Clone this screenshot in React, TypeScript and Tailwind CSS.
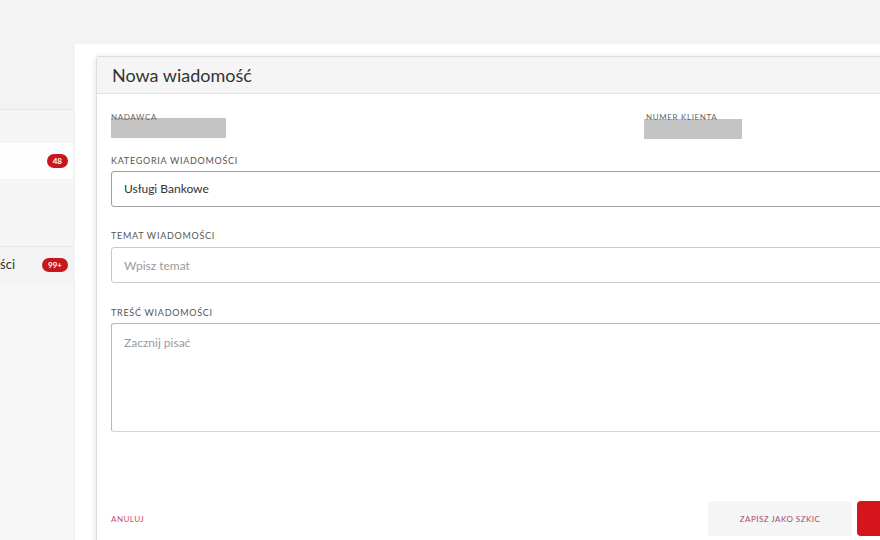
import { useState } from "react";

// Badge pill used in the folder list
function Badge({ count }: { count: string }) {
  return (
    <span className="h-[14px] px-[6px] rounded-full bg-[#c8161d] text-white text-[8px] font-bold leading-[14px] flex items-center justify-center shrink-0">
      {count}
    </span>
  );
}

function FieldLabel({ children }: { children: string }) {
  return (
    <div className="text-[9px] leading-[12px] tracking-[0.08em] text-[#555] uppercase">
      {children}
    </div>
  );
}

export default function App() {
  const [category] = useState("Usługi Bankowe");
  const [subject, setSubject] = useState("");
  const [body, setBody] = useState("");

  return (
    <div className="w-[880px] h-[540px] overflow-hidden bg-[#f3f3f3] font-['Lato','Open_Sans',sans-serif] flex flex-col">
      <div className="h-[44px] shrink-0" />

      <div className="flex flex-1 min-h-0 gap-[2px]">
        {/* folder list */}
        <aside className="w-[73px] shrink-0 flex flex-col overflow-hidden">
          <div className="h-[66px] shrink-0 border-b border-[#e6e6e6]" />
          <div className="h-[33px] shrink-0 bg-[#f5f5f5]" />
          <div className="h-[36px] shrink-0 bg-[#fdfdfd] flex items-center justify-end pr-[5px]">
            <Badge count="48" />
          </div>
          <div className="h-[68px] shrink-0 bg-[#f5f5f5] border-b border-[#e4e4e4]" />
          <div className="h-[36px] shrink-0 flex items-center justify-end pr-[5px] gap-[27px] overflow-hidden">
            <span className="text-[13px] text-[#333] whitespace-nowrap shrink-0">Wysłane wiadomości</span>
            <Badge count="99+" />
          </div>
          <div className="flex-1 bg-[#f7f7f7]" />
        </aside>

        <main className="flex-1 min-w-0 bg-white pl-[21px] pt-[12px] overflow-hidden">
          <section className="w-[920px] bg-white border border-[#dedede] rounded-t-[3px] shadow-[0_1px_6px_rgba(0,0,0,0.12)]">
            <header className="h-[37px] bg-[#f5f5f5] border-b border-[#e2e2e2] px-[15px] flex items-center">
              <h1 className="text-[18px] text-[#333]">Nowa wiadomość</h1>
            </header>

            <div className="px-[14px] pt-[18px] pb-[20px] flex flex-col">
              <div className="flex">
                <div className="w-[535px] shrink-0">
                  <div className="text-[8px] leading-[10px] tracking-[0.08em] text-[#666]">NADAWCA</div>
                  <div className="-mt-[4px] w-[115px] h-[20px] bg-[#c4c4c4]" />
                </div>
                <div>
                  <div className="text-[8px] leading-[10px] tracking-[0.08em] text-[#666]">NUMER KLIENTA</div>
                  <div className="-mt-[3px] -ml-[2px] w-[98px] h-[20px] bg-[#c4c4c4]" />
                </div>
              </div>

              <div className="mt-[16px]">
                <FieldLabel>Kategoria wiadomości</FieldLabel>
              </div>
              <div className="mt-[4px] h-[36px] border border-[#9e9e9e] rounded-[3px] px-[12px] flex items-center text-[12px] text-[#333]">
                {category}
              </div>

              <div className="mt-[23px]">
                <FieldLabel>Temat wiadomości</FieldLabel>
              </div>
              <input
                value={subject}
                onChange={(e) => setSubject(e.target.value)}
                placeholder="Wpisz temat"
                className="mt-[5px] h-[36px] border border-[#c8c8c8] rounded-[3px] px-[12px] text-[12px] text-[#333] placeholder:text-[#9a9a9a] outline-none"
              />

              <div className="mt-[24px]">
                <FieldLabel>Treść wiadomości</FieldLabel>
              </div>
              <textarea
                value={body}
                onChange={(e) => setBody(e.target.value)}
                placeholder="Zacznij pisać"
                className="mt-[4px] h-[109px] resize-none border border-[#b8b8b8] border-b-[#d6d6d6] rounded-[3px] px-[12px] pt-[10px] text-[12px] text-[#333] placeholder:text-[#9a9a9a] outline-none"
              />

              <div className="mt-[69px] flex items-center">
                <button className="text-[8px] tracking-[0.06em] text-[#c0506e]">ANULUJ</button>
                <div className="flex-1" />
                <button className="w-[144px] h-[35px] bg-[#f5f5f5] rounded-[3px] text-[8px] tracking-[0.06em] text-[#a24a66]">
                  ZAPISZ JAKO SZKIC
                </button>
                <button className="ml-[5px] w-[144px] h-[35px] bg-[#d4151c] rounded-[4px] text-[9px] tracking-[0.06em] text-white">
                  WYŚLIJ
                </button>
              </div>
            </div>
          </section>
        </main>
      </div>
    </div>
  );
}
